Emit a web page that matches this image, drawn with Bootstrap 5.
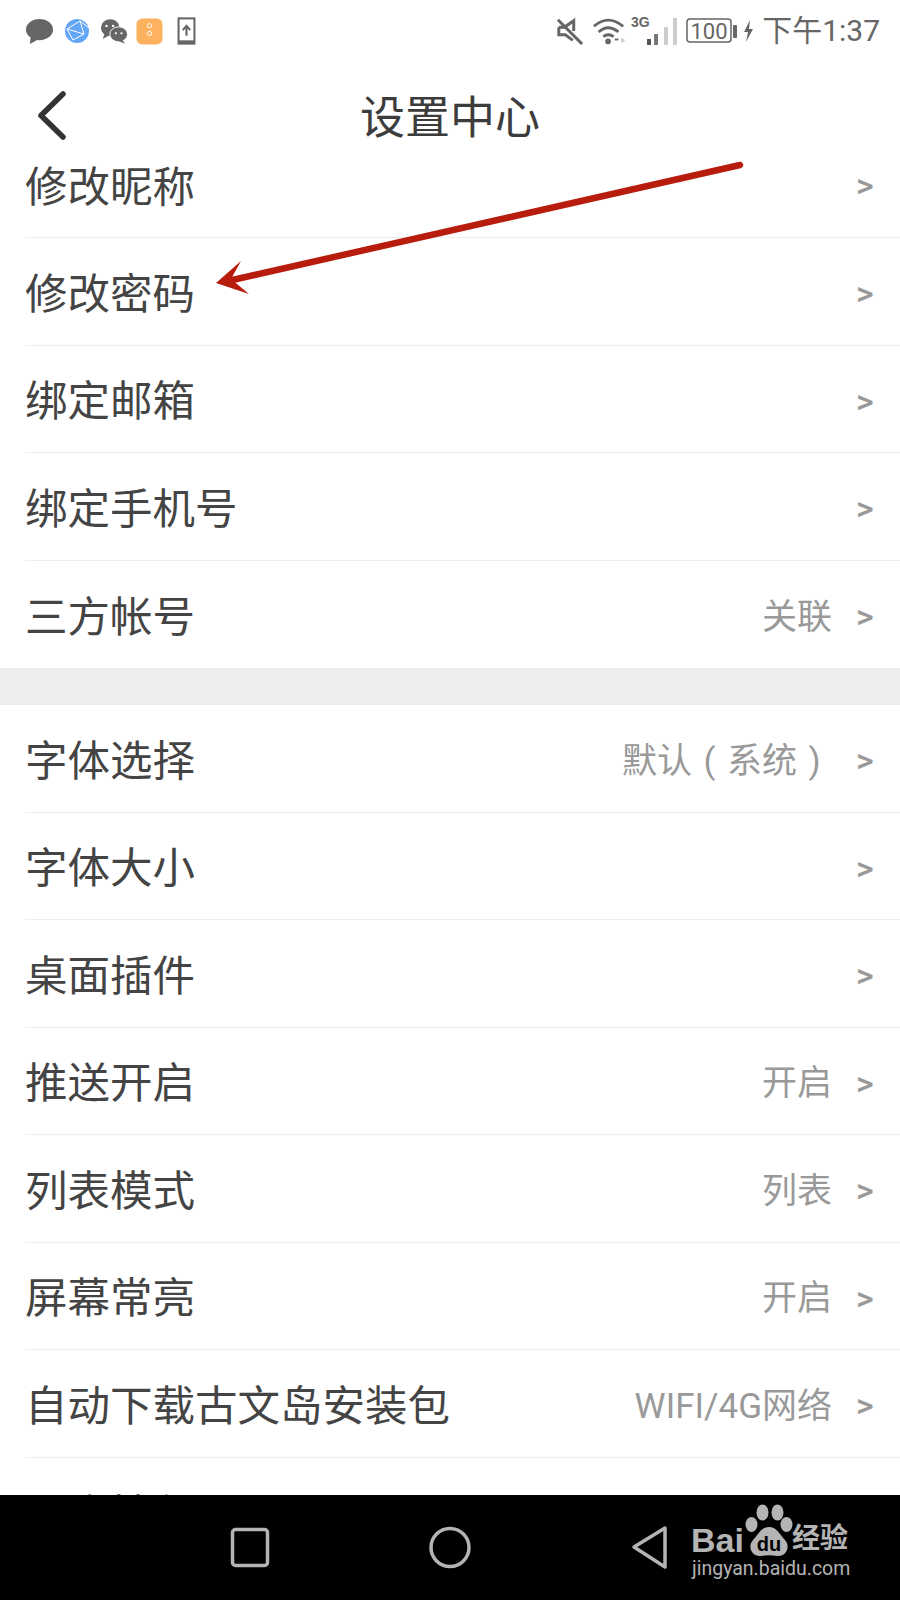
<!DOCTYPE html>
<html lang="zh">
<head>
    <meta charset="UTF-8">
    <meta name="viewport" content="width=device-width, initial-scale=1.0">
    <title>设置中心</title>
    <link href="https://cdn.jsdelivr.net/npm/bootstrap@5.3.0/dist/css/bootstrap.min.css" rel="stylesheet">
    <style>
        html, body {
            height: 1600px;
            overflow: hidden;
        }
        body {
            font-family: Roboto, "Noto Sans CJK SC", sans-serif;
            background: #fff;
        }
        .phone {
            height: 1600px;
            position: relative;
        }
        .status-bar {
            height: 62px;
            padding: 0 20px 0 25px;
            color: #666;
        }
        .status-left svg + svg {
            margin-left: 11px;
        }
        .status-left svg.phone-up {
            margin-left: 14px;
        }
        .status-time {
            font-size: 30px;
            line-height: 1;
            color: #666;
        }
        .title-bar {
            height: 98px;
            position: relative;
        }
        .title-text {
            font-size: 45px;
            line-height: 1;
            color: #3c3c3c;
            margin-top: 14px;
        }
        .back-btn {
            position: absolute;
            left: 36px;
            top: 28px;
        }
        .settings {
            height: 1335px;
            overflow: hidden;
        }
        .setting-row {
            height: 107.5px;
            margin-left: 25px;
            padding-top: 7px;
            padding-right: 25px;
            border-bottom: 1px solid #eee;
            color: #444;
            font-size: 42.5px;
        }
        .setting-row.first-row {
            height: 78px;
            padding-top: 0;
            padding-bottom: 21px;
        }
        .setting-row.first-row .setting-arrow {
            margin-top: -7px;
        }
        .setting-row.last-row {
            border-bottom: 0;
        }
        .setting-row.cut-row {
            height: 40px;
            padding-top: 26px;
            align-items: flex-start !important;
            border-bottom: 0;
        }
        .setting-value {
            font-size: 35px;
            color: #999;
            margin-right: 24px;
        }
        .paren-box {
            display: inline-block;
            width: 1em;
            text-align: center;
        }
        .setting-arrow {
            font-size: 34px;
            font-weight: 500;
            color: #999;
            width: 19px;
            line-height: 1;
            margin-top: -3px;
        }
        .section-gap {
            height: 37px;
            background: #ededed;
        }
        .nav-keys {
            height: 105px;
            background: #000;
            position: relative;
        }
        .baidu-mark {
            position: absolute;
            left: 689px;
            top: 0;
            width: 170px;
            height: 100px;
            color: #b4b4b4;
        }
        .baidu-top {
            position: absolute;
            left: 2px;
            top: 28px;
            font-family: "Liberation Sans", sans-serif;
            font-size: 34px;
            font-weight: 700;
            line-height: 1;
        }
        .baidu-paw {
            position: absolute;
            left: 55px;
            top: 8px;
        }
        .baidu-jy {
            position: absolute;
            left: 103px;
            top: 30px;
            font-size: 28px;
            font-weight: 700;
            line-height: 1;
        }
        .baidu-url {
            position: absolute;
            left: 3px;
            top: 63px;
            font-size: 19.500px;
            line-height: 1.1;
            white-space: nowrap;
        }
        .overlay-mark {
            position: absolute;
            left: 0;
            top: 0;
            pointer-events: none;
        }
    </style>
</head>
<body>
    <div class="phone d-flex flex-column">
        <!-- status bar -->
        <div class="status-bar d-flex align-items-center justify-content-between">
            <div class="status-left d-flex align-items-center">
                <svg width="29" height="29" viewBox="0 0 30 30"><ellipse cx="15" cy="13" rx="14" ry="11" fill="#666"/><path d="M6 20 L5 28 L14 23 Z" fill="#666"/></svg>
                <svg width="24" height="24" viewBox="0 0 24 24"><circle cx="12" cy="12" r="12" fill="#63a6f5"/><path d="M2 10 L15 2 L19 15 L8 21 Z M2 10 L19 15 M15 2 L24 9" fill="none" stroke="#fff" stroke-width="1"/></svg>
                <svg width="28" height="27" viewBox="0 0 30 28"><ellipse cx="11" cy="10" rx="10" ry="9" fill="#666"/><path d="M5 16 L3 22 L10 18 Z" fill="#666"/><ellipse cx="20" cy="17" rx="9.500" ry="8" fill="#666" stroke="#fff" stroke-width="1"/><path d="M24 23 L27 27 L19 24 Z" fill="#666"/><circle cx="7" cy="8" r="1.300" fill="#fff"/><circle cx="14" cy="8" r="1.300" fill="#fff"/><circle cx="17" cy="16" r="1.200" fill="#fff"/><circle cx="23" cy="16" r="1.200" fill="#fff"/></svg>
                <svg width="27" height="27" viewBox="0 0 28 28" class="ms-2"><rect x="0.500" y="0.500" width="27" height="27" rx="6" fill="#fcb25e"/><circle cx="14" cy="8" r="2.200" fill="none" stroke="#fff" stroke-width="1"/><circle cx="14" cy="16" r="2.200" fill="none" stroke="#fff" stroke-width="1"/></svg>
                <svg width="19" height="28" viewBox="0 0 20 30" class="phone-up"><rect x="1.500" y="1.500" width="17" height="27" fill="none" stroke="#666" stroke-width="2.200"/><rect x="1" y="25" width="18" height="4" fill="#666"/><path d="M10 20 V10 M6 14 L10 9.500 L14 14" fill="none" stroke="#666" stroke-width="2.200"/></svg>
            </div>
            <div class="d-flex align-items-center">
                <svg width="28" height="28" viewBox="0 0 30 30"><path d="M3 11 H9 L19 4 V15 M3 11 V19 H10 L18 25" fill="none" stroke="#666" stroke-width="3.200"/><path d="M2 3 L28 29" stroke="#666" stroke-width="3.200"/></svg>
                <svg width="34" height="30" viewBox="0 0 36 30" class="ms-2"><path d="M2 10 Q17 -3 33 10 M7 16 Q17 7 28 16 M12 21 Q17 17 23 21" fill="none" stroke="#666" stroke-width="3"/><circle cx="17" cy="26" r="3" fill="#666"/><path d="M24 24 H28" stroke="#666" stroke-width="2"/><path d="M31 22 L35 25 L31 28 Z" fill="#ccc"/></svg>
                <svg width="48" height="34" viewBox="-2 0 48 34" class="ms-1"><text x="-1" y="13" font-size="14" font-weight="700" fill="#666" font-family="Liberation Sans Narrow, Liberation Sans, sans-serif">3G</text><rect x="15" y="25" width="4" height="6" fill="#555"/><rect x="22" y="20" width="4" height="11" fill="#777"/><rect x="32" y="13" width="4" height="18" fill="#ccc"/><rect x="41" y="4" width="4" height="27" fill="#ccc"/></svg>
                <svg width="68" height="26" viewBox="0 0 68 26" class="ms-2"><rect x="1" y="1" width="44" height="23" rx="3" fill="none" stroke="#666" stroke-width="1.500"/><text x="23" y="21" text-anchor="middle" font-size="22" fill="#666" font-family="Roboto, sans-serif">100</text><rect x="47" y="7" width="4" height="13" rx="1" fill="#666"/><path d="M64 2 L58 14 H62 L60 24 L67 11 H63 Z" fill="#666"/></svg>
                <span class="status-time ms-2">下午1:37</span>
            </div>
        </div>

        <!-- title -->
        <div class="title-bar d-flex align-items-center justify-content-center">
            <a class="back-btn" aria-label="返回">
                <svg width="32" height="52" viewBox="0 0 32 52"><path d="M27 4 L5 25.500 L27 47" fill="none" stroke="#333" stroke-width="5.500" stroke-linecap="round" stroke-linejoin="round"/></svg>
            </a>
            <span class="title-text">设置中心</span>
        </div>

        <!-- list -->
        <div class="settings">
            <div class="setting-row first-row d-flex align-items-center justify-content-between"><span>修改昵称</span><span class="d-flex align-items-center"><span class="setting-arrow">&gt;</span></span></div>
            <div class="setting-row d-flex align-items-center justify-content-between"><span>修改密码</span><span class="d-flex align-items-center"><span class="setting-arrow">&gt;</span></span></div>
            <div class="setting-row d-flex align-items-center justify-content-between"><span>绑定邮箱</span><span class="d-flex align-items-center"><span class="setting-arrow">&gt;</span></span></div>
            <div class="setting-row d-flex align-items-center justify-content-between"><span>绑定手机号</span><span class="d-flex align-items-center"><span class="setting-arrow">&gt;</span></span></div>
            <div class="setting-row last-row d-flex align-items-center justify-content-between"><span>三方帐号</span><span class="d-flex align-items-center"><span class="setting-value">关联</span><span class="setting-arrow">&gt;</span></span></div>
            <div class="section-gap"></div>
            <div class="setting-row d-flex align-items-center justify-content-between"><span>字体选择</span><span class="d-flex align-items-center"><span class="setting-value">默认<span class="paren-box">(</span>系统<span class="paren-box">)</span></span><span class="setting-arrow">&gt;</span></span></div>
            <div class="setting-row d-flex align-items-center justify-content-between"><span>字体大小</span><span class="d-flex align-items-center"><span class="setting-arrow">&gt;</span></span></div>
            <div class="setting-row d-flex align-items-center justify-content-between"><span>桌面插件</span><span class="d-flex align-items-center"><span class="setting-arrow">&gt;</span></span></div>
            <div class="setting-row d-flex align-items-center justify-content-between"><span>推送开启</span><span class="d-flex align-items-center"><span class="setting-value">开启</span><span class="setting-arrow">&gt;</span></span></div>
            <div class="setting-row d-flex align-items-center justify-content-between"><span>列表模式</span><span class="d-flex align-items-center"><span class="setting-value">列表</span><span class="setting-arrow">&gt;</span></span></div>
            <div class="setting-row d-flex align-items-center justify-content-between"><span>屏幕常亮</span><span class="d-flex align-items-center"><span class="setting-value">开启</span><span class="setting-arrow">&gt;</span></span></div>
            <div class="setting-row d-flex align-items-center justify-content-between"><span>自动下载古文岛安装包</span><span class="d-flex align-items-center"><span class="setting-value">WIFI/4G网络</span><span class="setting-arrow">&gt;</span></span></div>
            <div class="setting-row cut-row d-flex justify-content-between"><span>一个性化</span></div>
        </div>

        <!-- android keys -->
        <div class="nav-keys">
            <svg class="overlay-mark" width="900" height="105" viewBox="0 0 900 105">
                <rect x="232.500" y="34.500" width="35" height="36" rx="3" fill="none" stroke="#b4b4b4" stroke-width="3.500"/>
                <circle cx="450" cy="52.500" r="19" fill="none" stroke="#b4b4b4" stroke-width="3.500"/>
                <path d="M665 33 L634 52 L665 72 Z" fill="none" stroke="#b4b4b4" stroke-width="3.500" stroke-linejoin="round"/>
            </svg>
            <div class="baidu-mark">
                <span class="baidu-top">Bai</span>
                <svg class="baidu-paw" width="50" height="56" viewBox="0 0 50 56"><ellipse cx="18.500" cy="9.500" rx="6" ry="8" fill="#b4b4b4"/><ellipse cx="33.500" cy="9.500" rx="6" ry="8" fill="#b4b4b4"/><ellipse cx="7.500" cy="21.500" rx="6" ry="7.500" fill="#b4b4b4"/><ellipse cx="42.500" cy="21.500" rx="6" ry="7.500" fill="#b4b4b4"/><path d="M25 24 C33 24 36 32 41 37 C47 44 42 54 33 53 C28 52 22 52 17 53 C8 54 3 44 9 37 C14 32 17 24 25 24 Z" fill="#b4b4b4"/><text x="25" y="48" text-anchor="middle" font-size="20" font-weight="700" fill="#000" font-family="Liberation Sans, sans-serif">du</text></svg>
                <span class="baidu-jy">经验</span>
                <span class="baidu-url">jingyan.baidu.com</span>
            </div>
        </div>

        <!-- red annotation arrow -->
        <svg class="overlay-mark" width="900" height="1600" viewBox="0 0 900 1600">
            <path d="M740 165 L228 281" fill="none" stroke="#b71c0c" stroke-width="6.500" stroke-linecap="round"/>
            <path d="M216 283 L241 261 L231 279 L249 294 Z" fill="#b71c0c"/>
        </svg>
    </div>
    <script src="https://cdn.jsdelivr.net/npm/bootstrap@5.3.0/dist/js/bootstrap.bundle.min.js"></script>
</body>
</html>
